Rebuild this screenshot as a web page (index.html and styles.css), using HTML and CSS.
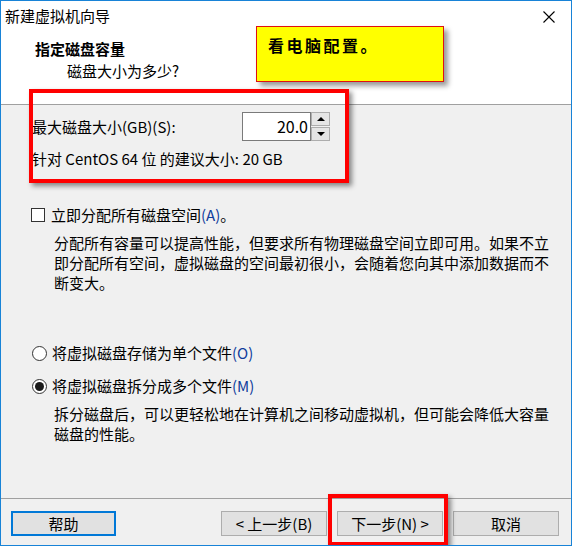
FILE: index.html
```html
<!DOCTYPE html>
<html lang="zh-CN">
<head>
<meta charset="utf-8">
<title>新建虚拟机向导</title>
<link rel="stylesheet" href="styles.css">
</head>
<body>
<div class="window">
  <div class="titlebar">
    <span class="title">新建虚拟机向导</span>
    <svg class="close" width="12" height="12" viewBox="0 0 12 12"><path d="M0.5 0.5 L11.5 11.5 M11.5 0.5 L0.5 11.5" stroke="#000" stroke-width="1.1" fill="none"/></svg>
  </div>
  <div class="header">
    <div class="h-title">指定磁盘容量</div>
    <div class="h-sub">磁盘大小为多少?</div>
  </div>
  <div class="content">
    <div class="size-row">
      <span class="size-label">最大磁盘大小(GB)(S):</span>
      <div class="spin">
        <div class="spin-input">20.0</div>
        <div class="spin-btns">
          <div class="spin-btn"><span class="tri-up"></span></div>
          <div class="spin-btn"><span class="tri-down"></span></div>
        </div>
      </div>
    </div>
    <div class="rec">针对 CentOS 64 位 的建议大小: 20 GB</div>
    <div class="opt check-row"><span class="checkbox"></span><span>立即分配所有磁盘空间<span class="mn">(A)</span>。</span></div>
    <p class="desc">分配所有容量可以提高性能，但要求所有物理磁盘空间立即可用。如果不立即分配所有空间，虚拟磁盘的空间最初很小，会随着您向其中添加数据而不断变大。</p>
    <div class="opt radio-row first"><span class="radio"></span><span>将虚拟磁盘存储为单个文件<span class="mn">(O)</span></span></div>
    <div class="opt radio-row second"><span class="radio on"></span><span>将虚拟磁盘拆分成多个文件<span class="mn">(M)</span></span></div>
    <p class="desc">拆分磁盘后，可以更轻松地在计算机之间移动虚拟机，但可能会降低大容量磁盘的性能。</p>
  </div>
  <div class="footer">
    <button class="btn help">帮助</button>
    <div class="spacer"></div>
    <button class="btn">&lt; 上一步(B)</button>
    <button class="btn">下一步(N) &gt;</button>
    <button class="btn">取消</button>
  </div>

  <div class="mark mark-size"></div>
  <div class="mark mark-next"></div>
  <div class="note">看电脑配置。</div>
</div>
</body>
</html>
```
FILE: styles.css
```css
* { box-sizing: border-box; }
html, body { margin: 0; padding: 0; background: #fff; }
body {
  font-family: "Noto Sans CJK SC", "Noto Sans", sans-serif;
  font-size: 15px;
  color: #000;
}
.window {
  position: relative;
  width: 572px;
  height: 546px;
  border: 1px solid #1883d7;
  display: flex;
  flex-direction: column;
  background: #f0f0f0;
  overflow: hidden;
}
.titlebar {
  height: 30px;
  background: #fff;
  display: flex;
  align-items: center;
  justify-content: space-between;
  padding: 0 16px 0 4px;
}
.title { line-height: 30px; font-size: 15px; }
.close { display: block; margin-top: 1px; }
.header {
  height: 74px;
  background: #fff;
  border-bottom: 1px solid #a0a0a0;
  padding: 8px 0 0 34px;
}
.h-title { font-weight: bold; line-height: 20px; font-size: 15px; }
.h-sub { line-height: 20px; margin-top: 2px; padding-left: 32px; }
.content {
  flex: 1;
  padding: 0 0 0 31px;
}
.size-row {
  display: flex;
  align-items: center;
  margin-top: 7px;
  height: 29px;
}
.size-label { width: 210px; line-height: 20px; }
.spin { display: flex; height: 29px; }
.spin-input {
  width: 69px;
  height: 29px;
  background: #fff;
  border: 1px solid #7a7a7a;
  text-align: right;
  font-size: 16px;
  line-height: 27px;
  padding-right: 2px;
}
.spin-btns { display: flex; flex-direction: column; gap: 1px; width: 19px; }
.spin-btn {
  flex: 1;
  background: #e5e5e5;
  border: 1px solid #adadad;
  display: flex;
  align-items: center;
  justify-content: center;
}
.tri-up, .tri-down { width: 0; height: 0; border-left: 4px solid transparent; border-right: 4px solid transparent; }
.tri-up { border-bottom: 4px solid #000; }
.tri-down { border-top: 4px solid #000; }
.rec { margin-top: 8px; line-height: 20px; }
.opt { display: flex; align-items: center; line-height: 20px; gap: 6px; }
.check-row { margin-top: 36px; margin-left: -1px; }
.checkbox {
  width: 14px; height: 14px;
  background: #fff;
  border: 1px solid #333;
}
.mn { color: #0f3d9c; }
.desc {
  margin: 8px 0 0 22px;
  width: 506px;
  line-height: 20px;
  letter-spacing: 0;
}
.radio-row { gap: 5px; }
.radio-row.first { margin-top: 50px; }
.radio-row.second { margin-top: 13px; }
.radio {
  width: 15px; height: 15px;
  border-radius: 50%;
  background: #fff;
  border: 1px solid #333;
  display: flex;
  align-items: center;
  justify-content: center;
}
.radio.on::after {
  content: "";
  width: 9px; height: 9px;
  border-radius: 50%;
  background: #1a1a1a;
}
.footer {
  height: 47px;
  border-top: 1px solid #a0a0a0;
  display: flex;
  align-items: flex-start;
  padding: 12px 12px 0 10px;
  gap: 10px;
}
.spacer { flex: 1; }
.btn {
  width: 106px;
  height: 25px;
  background: #e1e1e1;
  border: 1px solid #adadad;
  font-family: inherit;
  font-size: 15px;
  line-height: 21px;
  padding: 0;
  color: #000;
}
.btn.help { width: 105px; border: 2px solid #0078d7; }
.mark {
  position: absolute;
  border: 4px solid #ff0000;
  box-shadow: 3px 3px 5px rgba(0,0,0,0.45);
}
.mark-size { left: 28px; top: 88px; width: 320px; height: 94px; }
.mark-next { left: 327px; top: 493px; width: 120px; height: 52px; }
.note {
  position: absolute;
  left: 255px; top: 25px;
  width: 188px; height: 56px;
  background: #ffff00;
  border: 1px solid #e01010;
  box-shadow: 4px 4px 5px rgba(0,0,0,0.4);
  font-weight: bold;
  font-size: 16px;
  letter-spacing: 2.5px;
  line-height: 20px;
  padding: 8px 0 0 11px;
}
```
